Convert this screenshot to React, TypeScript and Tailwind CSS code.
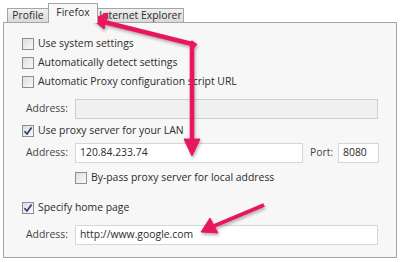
import type { ReactNode } from "react";

const font = { fontFamily: '"Open Sans", "Noto Sans", sans-serif' };

function Check({ checked = false }: { checked?: boolean }) {
  return (
    <span className="flex h-[12px] w-[12px] shrink-0 items-center justify-center border border-[#8f8f8f] bg-gradient-to-br from-[#dedede] to-[#fafafa]">
      {checked && (
        <svg width="10" height="10" viewBox="0 0 10 10">
          <path d="M1.5 5.2 L4 8 L8.6 1.5" fill="none" stroke="#2a3a7c" strokeWidth="1.7" />
        </svg>
      )}
    </span>
  );
}

function Row({ checked, children, className = "" }: { checked?: boolean; children: ReactNode; className?: string }) {
  return (
    <div className={`flex h-[18px] items-center gap-[4px] ${className}`}>
      <Check checked={checked} />
      <span>{children}</span>
    </div>
  );
}

function Field({ value = "", disabled = false, className = "" }: { value?: string; disabled?: boolean; className?: string }) {
  return (
    <div
      className={`flex h-[20px] items-center border px-[4px] ${
        disabled ? "border-[#cfcfcf] bg-[#f0f0f0]" : "border-[#d6d6d6] bg-white"
      } ${className}`}
    >
      {value}
    </div>
  );
}

function Tab({ label, active = false, className = "" }: { label: string; active?: boolean; className?: string }) {
  return (
    <div
      className={`flex items-center justify-center whitespace-nowrap border border-b-0 border-[#a5a5a5] ${
        active
          ? "relative z-10 -mb-px h-[20px] bg-[#f7f7f7] pb-[2px]"
          : "h-[14px] bg-gradient-to-b from-[#f0f0f0] to-[#dadada]"
      } ${className}`}
    >
      {label}
    </div>
  );
}

export default function App() {
  return (
    <div className="relative h-[262px] w-[400px] overflow-hidden bg-white text-[10.4px] text-[#2b2b2b]" style={font}>
      <div className="flex items-end pl-[7px] pt-[3px]">
        <Tab label="Profile" className="w-[42px]" />
        <Tab label="Firefox" active className="-ml-px w-[50px]" />
        <Tab label="Internet Explorer" className="-ml-px w-[87px]" />
      </div>
      <div className="ml-[3px] h-[236px] w-[394px] border border-[#a5a5a5] bg-[#f7f7f7] pl-[18px] pt-[12px]">
        <Row>Use system settings</Row>
        <Row className="mt-px">Automatically detect settings</Row>
        <Row className="mt-px">Automatic Proxy configuration script URL</Row>
        <div className="mt-[8px] flex items-center">
          <span className="w-[53px] pl-[4px] text-[#444]">Address:</span>
          <Field disabled className="w-[303px]" />
        </div>
        <Row checked className="mt-[3px]">Use proxy server for your LAN</Row>
        <div className="mt-[3px] flex items-center">
          <span className="w-[53px] pl-[4px] text-[#444]">Address:</span>
          <Field value="120.84.233.74" className="w-[228px]" />
          <span className="ml-[7px] w-[28px] text-[#444]">Port:</span>
          <Field value="8080" className="w-[41px]" />
        </div>
        <Row className="ml-[53px] mt-[6px]">By-pass proxy server for local address</Row>
        <Row checked className="mt-[12px]">Specify home page</Row>
        <div className="mt-[8px] flex items-center">
          <span className="w-[53px] pl-[4px] text-[#444]">Address:</span>
          <Field value="http://www.google.com" className="w-[303px]" />
        </div>
      </div>
      <svg className="pointer-events-none absolute inset-0" width="400" height="262" viewBox="0 0 400 262">
        <defs>
          <filter id="sh" x="-20%" y="-20%" width="140%" height="140%">
            <feDropShadow dx="1" dy="2" stdDeviation="1.5" floodColor="#000" floodOpacity="0.3" />
          </filter>
        </defs>
        <g fill="#e8175f" stroke="#e8175f" strokeLinejoin="round" filter="url(#sh)">
          <path d="M192 44 L104 22" fill="none" strokeWidth="4.5" />
          <polygon points="92,19 108,13 104,29" strokeWidth="1" />
          <path d="M196 46 L192 43 L192 142" fill="none" strokeWidth="4.5" />
          <polygon points="192,156 184,139 200,139" strokeWidth="1" />
          <path d="M264 205 L214 226" fill="none" strokeWidth="4" />
          <polygon points="201,232 210,218 218,233" strokeWidth="1" />
        </g>
      </svg>
    </div>
  );
}
